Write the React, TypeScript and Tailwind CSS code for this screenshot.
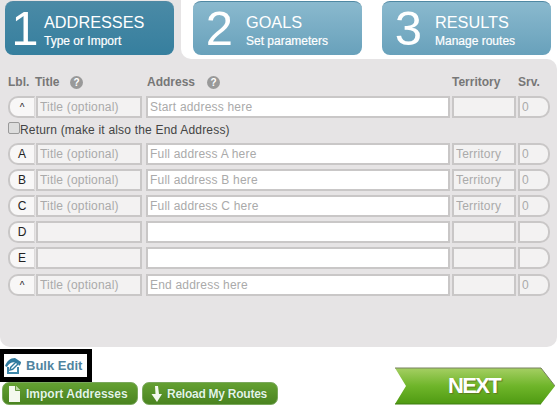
const font = { fontFamily: '"Liberation Sans", Arial, sans-serif' }

const Help = () => (
  <span className="flex h-[13px] w-[13px] items-center justify-center rounded-full bg-[#999] text-[10px] font-bold leading-none text-white">?</span>
)

const Tab = ({ num, title, sub, active }: { num: string; title: string; sub: string; active?: boolean }) => (
  <div className={`flex h-[54px] w-[169px] rounded-[8px] border-t border-t-[#4f88a3] text-white ${active ? 'bg-gradient-to-b from-[#4a8aa6] to-[#367f9e]' : 'bg-gradient-to-b from-[#8ab9ce] to-[#68a1bb]'}`}>
    <span className={`self-center text-center text-[49px] leading-none ${active ? 'w-[39px] pl-[1px]' : 'w-[53px]'}`}>{num}</span>
    <div className="pt-[10px]">
      <div className="text-[16.3px] leading-[20px]">{title}</div>
      <div className="text-[12px] leading-[18px] [-webkit-text-stroke:0.2px_white]">{sub}</div>
    </div>
  </div>
)

const field = 'h-[22px] border-2 border-[#c9c7c7] text-[12px] tracking-[0.2px] px-[2px] outline-none placeholder:text-[#aaa]'

const Row = ({ lbl, title, address, territory, srv }: { lbl: string; title?: string; address?: string; territory?: string; srv?: string }) => (
  <div className="flex h-[22px]">
    <div className={`flex h-[22px] w-[27px] items-center justify-center rounded-l-[10px] border-2 border-r border-[#c9c7c7] border-r-[#dcdada] bg-[#f8f7f7] text-[#222] ${lbl === '^' ? 'text-[10px]' : 'text-[12px]'}`}>{lbl}</div>
    <input readOnly placeholder={title} className={`${field} ml-px w-[106px] bg-[#f3f2f2]`} />
    <input readOnly placeholder={address} className={`${field} ml-[4px] w-[304px] bg-white`} />
    <input readOnly placeholder={territory} className={`${field} ml-[2px] w-[64px] bg-[#f3f2f2]`} />
    <input readOnly placeholder={srv} className={`${field} ml-[2px] w-[32px] rounded-r-[10px] bg-[#f3f2f2]`} />
  </div>
)

const GreenButton = ({ icon, label, tight }: { icon: React.ReactNode; label: string; tight?: boolean }) => (
  <div className={`flex h-[23px] w-[136px] items-center rounded-[7px] border border-[#7aa85c] bg-gradient-to-b from-[#64a032] to-[#4a8420] text-[12px] font-bold text-[#e3f6e6] [text-shadow:0_0_1px_#2f5f10] ${tight ? 'tracking-[-0.25px]' : ''}`}>
    {icon}
    <span>{label}</span>
  </div>
)

export default function App() {
  return (
    <div className="h-[412px] w-[559px] overflow-hidden bg-white" style={font}>
      <div className="w-[557px]">
        <div className="flex h-[59px] bg-[#e6e4e5]">
          <div className="w-[181px] pl-[5px] pt-px">
            <Tab num="1" title="ADDRESSES" sub="Type or Import" active />
          </div>
          <div className="flex flex-1 gap-[20px] rounded-bl-[10px] bg-white pl-[12px] pt-px">
            <Tab num="2" title="GOALS" sub="Set parameters" />
            <Tab num="3" title="RESULTS" sub="Manage routes" />
          </div>
        </div>

        <div className="h-[288px] rounded-b-[10px] rounded-tr-[10px] bg-[#e6e4e5] pl-[8px]">
          <div className="flex h-[37px] items-end pb-[7px] text-[12px] font-bold leading-[14px] text-[#777]">
            <span className="w-[27px]">Lbl.</span>
            <span className="w-[35px]">Title</span>
            <Help />
            <span className="ml-[64px] w-[60px]">Address</span>
            <Help />
            <span className="ml-[232px] w-[66px]">Territory</span>
            <span>Srv.</span>
          </div>
          <Row lbl="^" title="Title (optional)" address="Start address here" srv="0" />
          <label className="flex h-[25px] items-start pt-[4px] text-[12px] leading-[14px] tracking-[0.19px] text-[#444]">
            <input type="checkbox" className="h-[12px] w-[12px] appearance-none rounded-[2px] border border-[#999] bg-[#ddd]" />
            <span className="mt-px">Return (make it also the End Address)</span>
          </label>
          <div className="flex flex-col gap-[4px]">
            <Row lbl="A" title="Title (optional)" address="Full address A here" territory="Territory" srv="0" />
            <Row lbl="B" title="Title (optional)" address="Full address B here" territory="Territory" srv="0" />
            <Row lbl="C" title="Title (optional)" address="Full address C here" territory="Territory" srv="0" />
            <Row lbl="D" />
            <Row lbl="E" />
            <div className="mt-px">
              <Row lbl="^" title="Title (optional)" address="End address here" srv="0" />
            </div>
          </div>
        </div>
      </div>

      <div className="relative flex h-[65px] items-end justify-between pb-[7px] pl-[2px] pr-[4px]">
        <div className="absolute left-0 top-[2px] flex h-[33px] w-[92px] items-center border-[5px] border-l-[4px] border-black bg-white text-[13px] font-bold text-[#4f84a0]">
          <svg width="18" height="18" viewBox="0 0 18 18" className="mr-[4px] shrink-0">
            <path d="M1 9 C3 4 6 1 11 1 L17 5 C17 7 16 8 15 9 L14 6 C9 4 5 6 3 10 Z" fill="#2f7b9f" />
            <path d="M3 10 V17 H15 V10 H13 V15 H5 V10 Z" fill="#3f88aa" />
            <path d="M5 14 L6 10 L12 4 L15 7 L9 13 Z" fill="#2f7b9f" />
            <path d="M7 12 L7.500 10.500 L12 6 L13 7 L8.500 11.500 Z" fill="#fff" />
          </svg>
          Bulk Edit
        </div>
        <div className="flex gap-[4px]">
          <GreenButton
            label="Import Addresses"
            icon={
              <svg width="23" height="18" viewBox="0 0 23 18" className="shrink-0">
                <path d="M6 1 h7 l4 4 v12 h-11 Z" fill="#f4f9ee" />
                <path d="M12.500 1 v4.500 h4.500" fill="#bcd6a4" stroke="#4b8520" strokeWidth="0.8" />
              </svg>
            }
          />
          <GreenButton
            tight
            label="Reload My Routes"
            icon={
              <svg width="24" height="18" viewBox="0 0 24 18" className="shrink-0">
                <path d="M12 1 h3 l1 8 h3 l-5 8 l-5.500 -8 h4 Z" fill="#f4f9ee" />
              </svg>
            }
          />
        </div>
        <div className="relative h-[38px] w-[160px]">
          <svg width="160" height="38" viewBox="0 0 160 38" className="block">
            <defs>
              <linearGradient id="next" x1="0" y1="0" x2="0" y2="1">
                <stop offset="0" stopColor="#a5cf63" />
                <stop offset="0.5" stopColor="#6fb52a" />
                <stop offset="1" stopColor="#4f9a12" />
              </linearGradient>
            </defs>
            <path d="M0 1 H146 L160 19 L146 37 H0 L11 19 Z" fill="url(#next)" />
            <path d="M0 1 H146 L160 19" fill="none" stroke="#77805f" strokeWidth="1" />
            <path d="M146 37 H0" fill="none" stroke="#3f7d10" strokeWidth="1" />
          </svg>
          <span className="absolute left-[53px] top-[7px] text-[22px] font-bold leading-[24px] tracking-[-1.7px] text-white [text-shadow:1px_1px_1px_#5f7a20]">NEXT</span>
        </div>
      </div>
    </div>
  )
}
